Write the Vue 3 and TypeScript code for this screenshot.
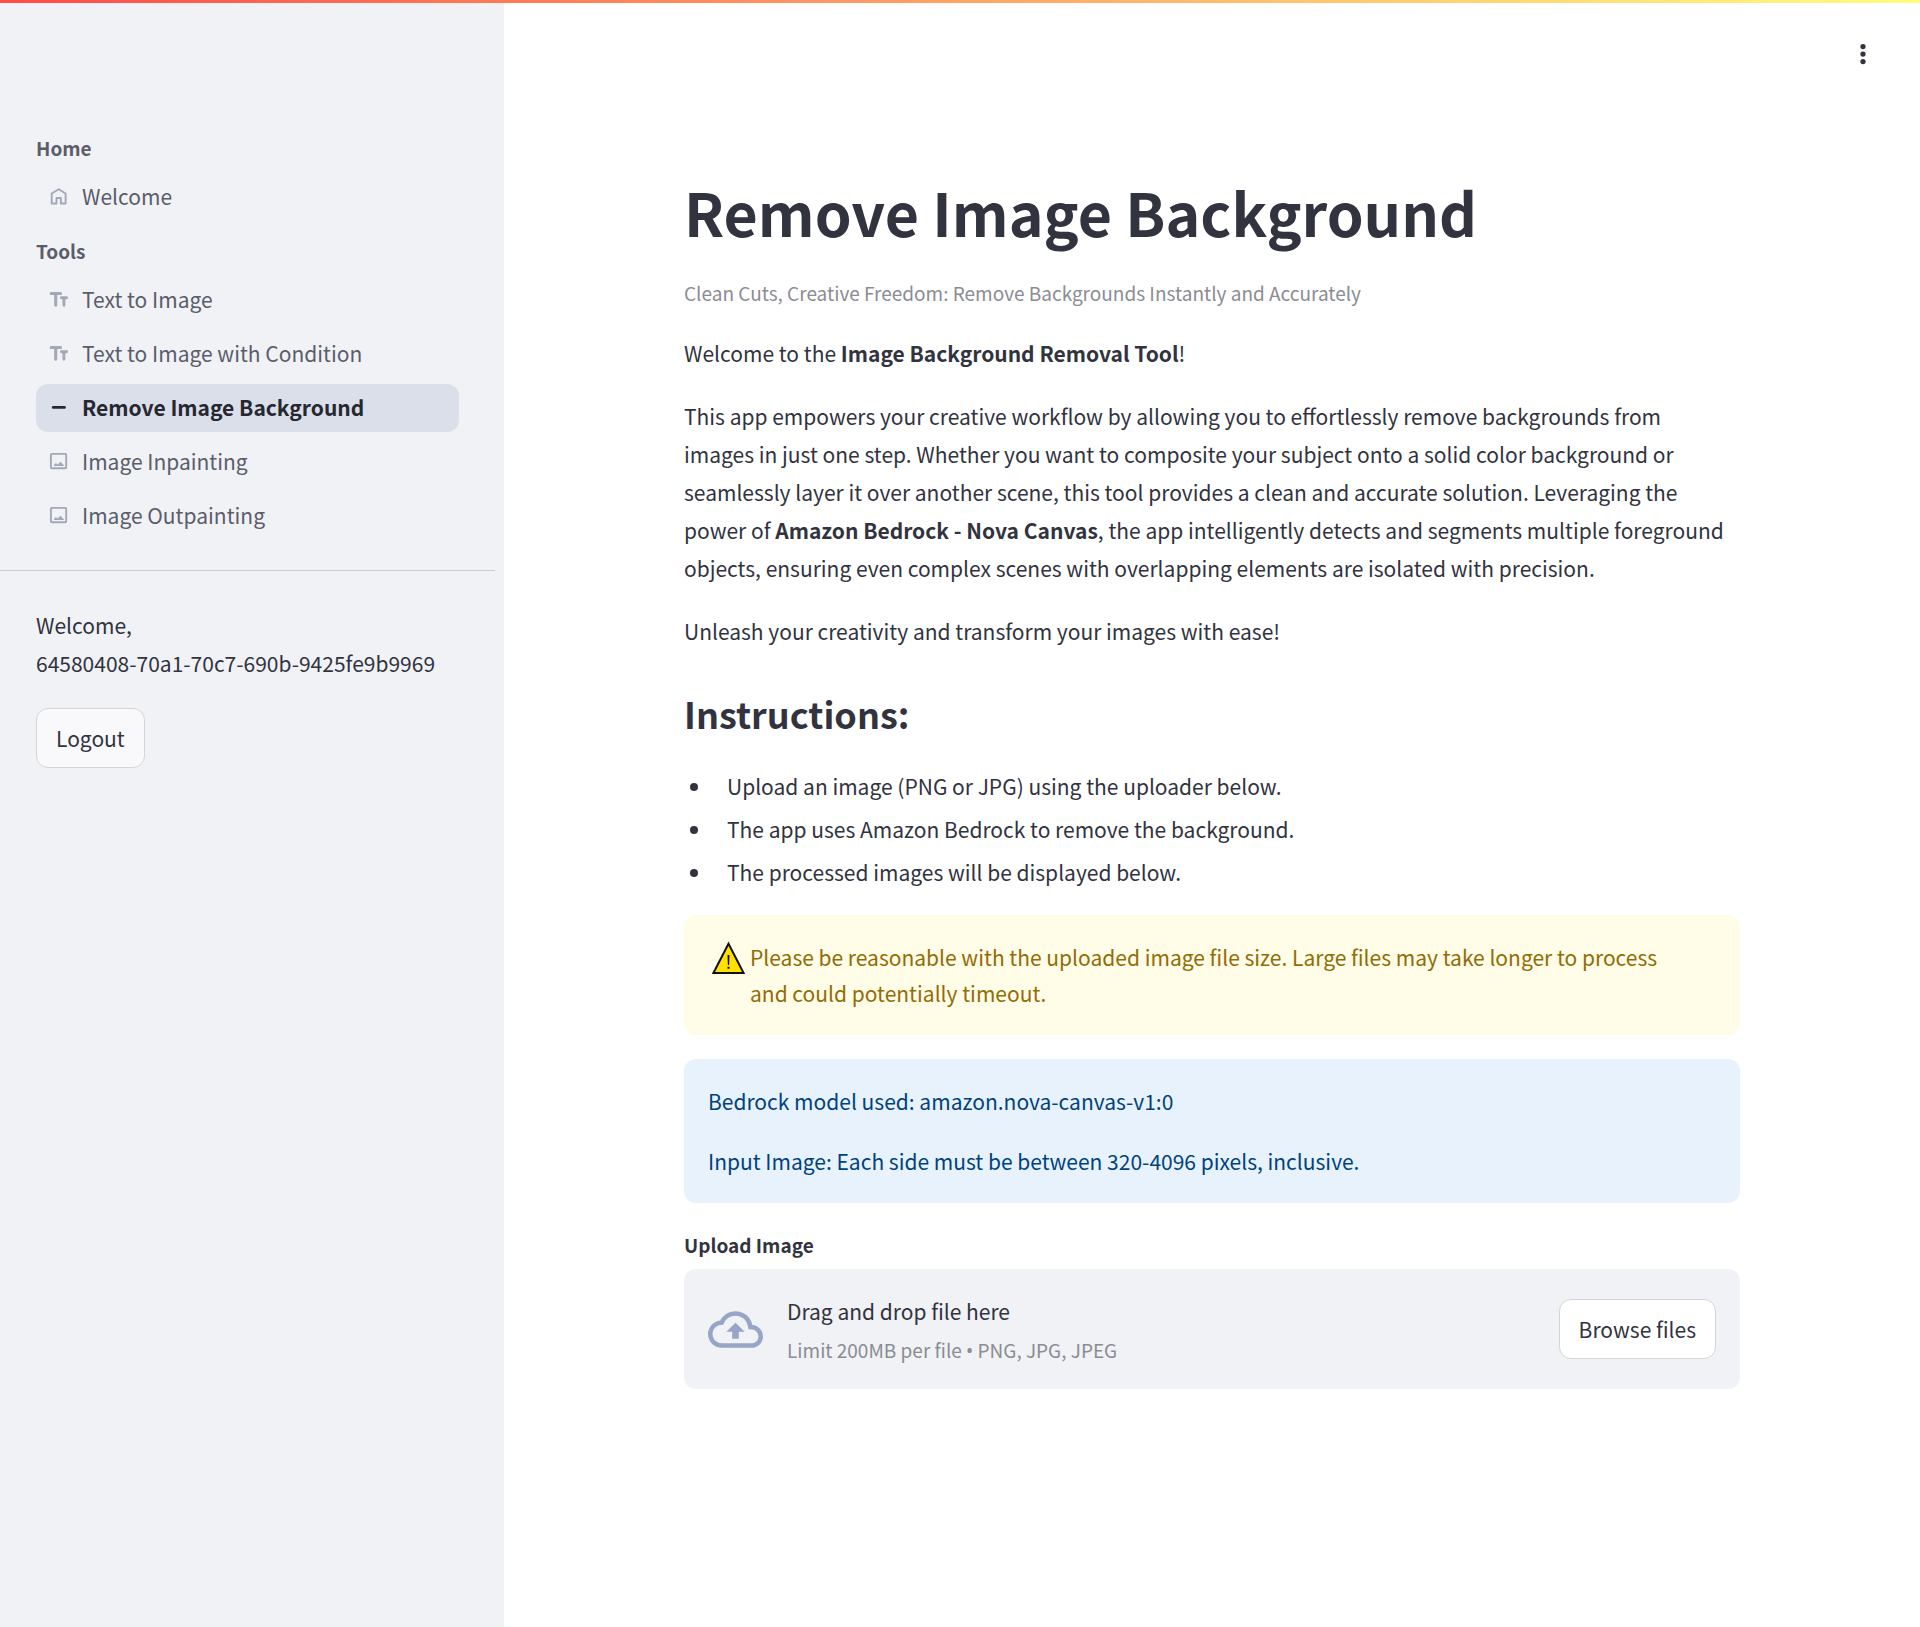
<script setup lang="ts">
import { ref } from 'vue'

type IconName = 'home' | 'text' | 'minus' | 'image'

interface NavItem {
  label: string
  icon: IconName
  active?: boolean
}

interface NavGroup {
  title: string
  items: NavItem[]
}

const groups: NavGroup[] = [
  { title: 'Home', items: [{ label: 'Welcome', icon: 'home' }] },
  {
    title: 'Tools',
    items: [
      { label: 'Text to Image', icon: 'text' },
      { label: 'Text to Image with Condition', icon: 'text' },
      { label: 'Remove Image Background', icon: 'minus', active: true },
      { label: 'Image Inpainting', icon: 'image' },
      { label: 'Image Outpainting', icon: 'image' },
    ],
  },
]

const instructions: string[] = [
  'Upload an image (PNG or JPG) using the uploader below.',
  'The app uses Amazon Bedrock to remove the background.',
  'The processed images will be displayed below.',
]

const userId = '64580408-70a1-70c7-690b-9425fe9b9969'
const fileInput = ref<HTMLInputElement | null>(null)

function browse(): void {
  fileInput.value?.click()
}
</script>

<template>
  <div class="app">
    <div class="decoration"></div>

    <aside class="sidebar">
      <nav class="nav">
        <section v-for="group in groups" :key="group.title" class="nav-group">
          <h2 class="nav-title">{{ group.title }}</h2>
          <ul class="nav-list">
            <li v-for="item in group.items" :key="item.label">
              <a href="#" class="nav-link" :class="{ active: item.active }">
                <svg class="nav-icon" viewBox="0 0 24 24" aria-hidden="true">
                  <path
                    v-if="item.icon === 'home'"
                    d="M4.7 8.5 11.7 4.2 18.6 8.5V18.5H13.9V13H9.5V18.5H4.7Z"
                    fill="none"
                    stroke="currentColor"
                    stroke-width="1.9"
                    stroke-linejoin="round"
                  />
                  <g v-else-if="item.icon === 'text'" fill="none" stroke="currentColor" stroke-linecap="round">
                    <path d="M4.2 5.5H13.5M8.7 5.5V17.1" stroke-width="3.1" />
                    <path d="M14.4 9.7H19.6M16.9 9.7V17.2" stroke-width="2.9" />
                  </g>
                  <path
                    v-else-if="item.icon === 'minus'"
                    d="M6.2 11.4H17.5"
                    stroke="currentColor"
                    stroke-width="2.6"
                    stroke-linecap="round"
                  />
                  <g v-else>
                    <rect x="3.9" y="3.9" width="15.3" height="14.4" rx="1" fill="none" stroke="currentColor" stroke-width="1.9" />
                    <path d="M7 16V15L8.8 13 10.6 14.6 13.5 11.7 17 15.4V16Z" fill="currentColor" />
                  </g>
                </svg>
                <span class="nav-label">{{ item.label }}</span>
              </a>
            </li>
          </ul>
        </section>
      </nav>
      <hr class="divider" />
      <div class="account">
        <p>Welcome,<br />{{ userId }}</p>
        <button type="button" class="button logout">Logout</button>
      </div>
    </aside>

    <main class="main">
      <header class="toolbar">
        <button type="button" class="menu" aria-label="Main menu">
          <svg viewBox="0 0 24 24" width="30" height="30" fill="currentColor" aria-hidden="true">
            <circle cx="12" cy="6" r="2.1" />
            <circle cx="12" cy="12" r="2.1" />
            <circle cx="12" cy="18" r="2.1" />
          </svg>
        </button>
      </header>

      <div class="content">
        <h1 class="title">Remove Image Background</h1>
        <p class="caption">Clean Cuts, Creative Freedom: Remove Backgrounds Instantly and Accurately</p>
        <div class="prose">
          <p>Welcome to the <strong>Image Background Removal Tool</strong>!</p>
          <p>
            This app empowers your creative workflow by allowing you to effortlessly remove backgrounds from images in
            just one step. Whether you want to composite your subject onto a solid color background or seamlessly
            layer it over another scene, this tool provides a clean and accurate solution. Leveraging the power of
            <strong>Amazon Bedrock - Nova Canvas</strong>, the app intelligently detects and segments multiple
            foreground objects, ensuring even complex scenes with overlapping elements are isolated with precision.
          </p>
          <p>Unleash your creativity and transform your images with ease!</p>
        </div>
        <h3 class="subtitle">Instructions:</h3>
        <ul class="steps">
          <li v-for="step in instructions" :key="step">{{ step }}</li>
        </ul>

        <div class="alert warning" role="alert">
          <svg class="alert-icon" viewBox="0 0 42 36" aria-hidden="true">
            <path d="M20.5 4.8 35.6 34H5.4Z" fill="#ffe100" stroke="#111" stroke-width="2" />
            <path d="M19.5 16H21.5L21.1 26H19.9ZM19.5 27.8H21.5V29.8H19.5Z" fill="#111" />
          </svg>
          <p>
            Please be reasonable with the uploaded image file size. Large files may take longer to process and could
            potentially timeout.
          </p>
        </div>

        <div class="alert info" role="alert">
          <p>Bedrock model used: amazon.nova-canvas-v1:0</p>
          <p>Input Image: Each side must be between 320-4096 pixels, inclusive.</p>
        </div>

        <div class="field">
          <label class="field-label" for="image-file">Upload Image</label>
          <div class="dropzone">
            <svg class="cloud" viewBox="0 0 24 24" fill="currentColor" aria-hidden="true">
              <path
                d="M19.35 10.04A7.49 7.49 0 0012 4C9.11 4 6.6 5.64 5.35 8.04A5.994 5.994 0 000 14c0 3.31 2.69 6 6 6h13c2.76 0 5-2.24 5-5 0-2.64-2.05-4.78-4.65-4.96zM19 18H6c-2.21 0-4-1.79-4-4 0-2.05 1.53-3.76 3.56-3.97l1.07-.11.5-.95A5.469 5.469 0 0112 6c2.62 0 4.88 1.86 5.39 4.43l.3 1.5 1.53.11A2.98 2.98 0 0122 15c0 1.65-1.35 3-3 3zM8 13h2.55v3h2.9v-3H16l-4-4z"
              />
            </svg>
            <div class="dropzone-text">
              <span>Drag and drop file here</span>
              <span class="drop-limit">Limit 200MB per file <span class="dot">•</span> PNG, JPG, JPEG</span>
            </div>
            <input id="image-file" ref="fileInput" class="file-input" type="file" accept=".png,.jpg,.jpeg" />
            <button type="button" class="button" @click="browse">Browse files</button>
          </div>
        </div>
      </div>
    </main>
  </div>
</template>

<style>
body {
  margin: 0;
  background: #ffffff;
}
</style>

<style scoped>
.app {
  position: relative;
  display: flex;
  min-height: 100vh;
  color: #31333f;
  font-family: 'Source Sans Pro', 'Noto Sans CJK SC', 'Noto Sans', sans-serif;
  font-size: 21px;
  line-height: 38px;
}

.app * {
  box-sizing: border-box;
}

h1,
h2,
h3,
p,
ul {
  margin: 0;
  padding: 0;
}

strong {
  font-weight: 600;
}

.decoration {
  position: absolute;
  top: 0;
  left: 0;
  right: 0;
  height: 3px;
  background: linear-gradient(90deg, #ff4b4b, #fffd80);
}

.sidebar {
  flex: 0 0 504px;
  padding-top: 133px;
  background: #f0f2f6;
}

.nav {
  display: flex;
  flex-direction: column;
  gap: 15px;
  padding: 0 45px 0 36px;
}

.nav-title {
  margin-bottom: 10px;
  color: #5b5d6b;
  font-size: 19px;
  font-weight: 600;
  line-height: 30px;
}

.nav-list {
  display: flex;
  flex-direction: column;
  gap: 6px;
  list-style: none;
}

.nav-link {
  display: flex;
  align-items: center;
  gap: 11px;
  height: 48px;
  padding: 0 11px;
  border-radius: 12px;
  color: #5b5d6b;
  text-decoration: none;
  white-space: nowrap;
}

.nav-link.active {
  background: #dadfe9;
  color: #262730;
  font-weight: 600;
}

.nav-icon {
  flex: none;
  width: 24px;
  height: 24px;
  color: #a3a8b8;
}

.active .nav-icon {
  color: #262730;
}

.nav-label {
  padding-bottom: 2px;
}

.divider {
  margin: 30px 9px 0 0;
  border: 0;
  border-top: 1px solid #cacccf;
}

.account {
  padding: 35px 36px;
}

.button {
  height: 60px;
  padding: 0 19px;
  border: 1px solid #d4d5d9;
  border-radius: 12px;
  background: #ffffff;
  color: #31333f;
  font: inherit;
  white-space: nowrap;
}

.logout {
  margin-top: 26px;
  background: #f9f9fb;
}

.main {
  flex: 1;
  min-width: 0;
  padding: 0 24px;
}

.toolbar {
  display: flex;
  justify-content: flex-end;
  padding: 36px 15px 0;
}

.menu {
  display: flex;
  align-items: center;
  justify-content: center;
  width: 36px;
  height: 36px;
  padding: 0;
  border: 0;
  background: none;
  color: #31333f;
}

.content {
  display: flex;
  flex-direction: column;
  gap: 24px;
  max-width: 1056px;
  margin: 0 auto;
  padding: 100px 0 120px;
}

.prose {
  display: flex;
  flex-direction: column;
  gap: 25px;
  padding-right: 16px;
}

.title {
  font-size: 59px;
  font-weight: 700;
  line-height: 80px;
}

.caption {
  color: #8b8c94;
  font-size: 19px;
  line-height: 34px;
}

.subtitle {
  padding: 14px 0 5px;
  font-size: 36px;
  font-weight: 600;
  line-height: 50px;
}

.steps {
  display: flex;
  flex-direction: column;
  gap: 5px;
  padding-left: 29px;
}

.steps li {
  padding-left: 14px;
}

.alert {
  display: flex;
  padding: 24px;
  border-radius: 12px;
  line-height: 36px;
}

.warning {
  padding-right: 48px;
  background: #fffce7;
  color: #926c05;
}

.alert-icon {
  flex: none;
  width: 42px;
  height: 36px;
}

.info {
  flex-direction: column;
  gap: 24px;
  background: #e8f2fc;
  color: #004280;
}

.field {
  display: flex;
  flex-direction: column;
  gap: 6px;
}

.field-label {
  font-size: 19px;
  font-weight: 600;
  line-height: 36px;
}

.dropzone {
  position: relative;
  display: flex;
  align-items: center;
  gap: 24px;
  padding: 21px 24px;
  border-radius: 12px;
  background: #f0f2f6;
}

.cloud {
  flex: none;
  width: 55px;
  height: 55px;
  color: #97a6c6;
}

.dropzone-text {
  display: flex;
  flex: 1;
  flex-direction: column;
  gap: 3px;
  padding-top: 2px;
}

.drop-limit {
  color: #8b8c94;
  font-size: 19px;
  line-height: 34px;
}

.dot {
  font-family: 'Noto Sans', sans-serif;
}

/* Kept focusable for its label; the button opens the picker. */
.file-input {
  position: absolute;
  width: 1px;
  height: 1px;
  overflow: hidden;
  clip-path: inset(50%);
}
</style>
